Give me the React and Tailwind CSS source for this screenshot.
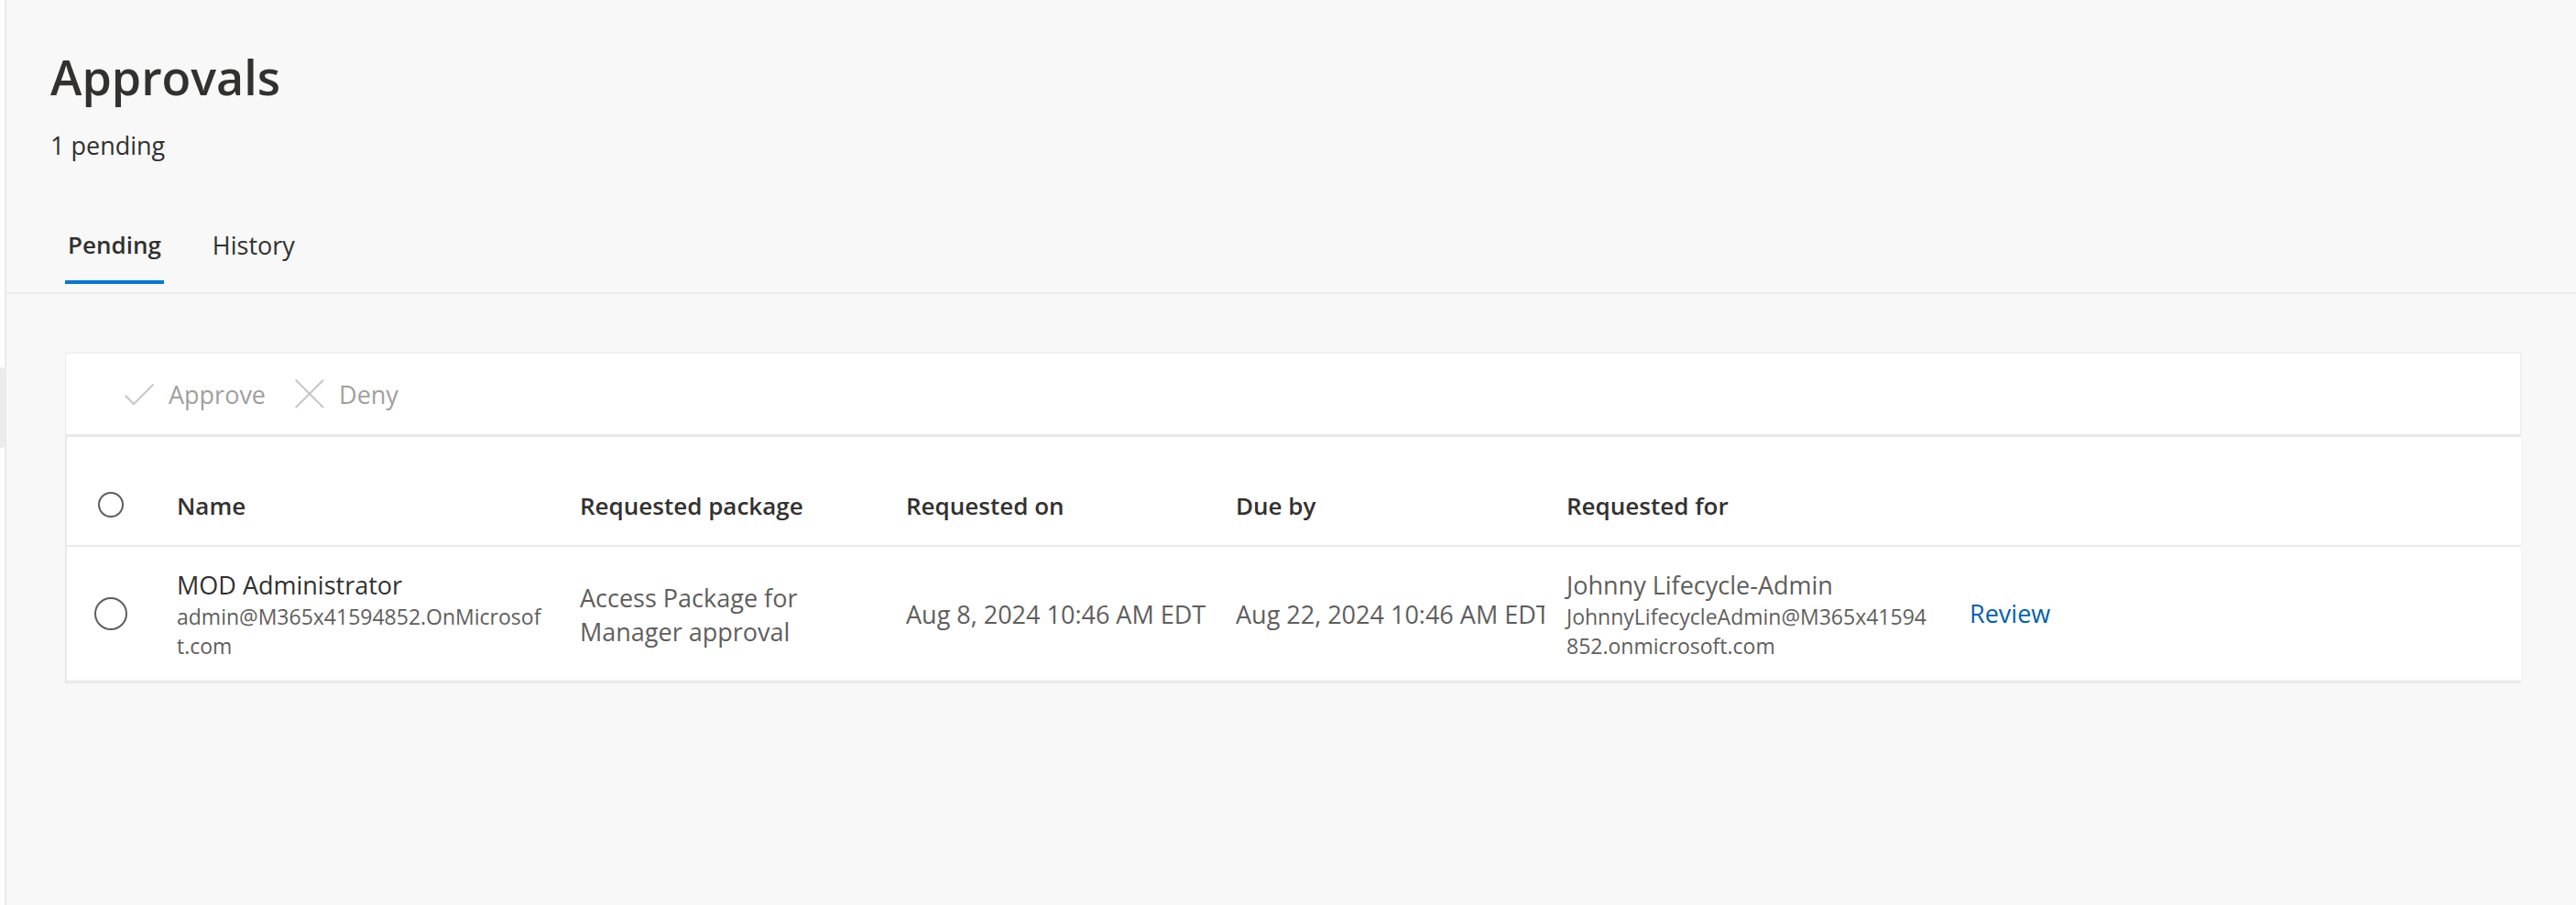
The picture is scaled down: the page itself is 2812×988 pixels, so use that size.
import { useState } from 'react';

const tabs = ['Pending', 'History'];

function CheckIcon() {
  return (
    <svg viewBox="0 0 32 32" className="size-8" fill="none" stroke="#c8c6c4" strokeWidth="2" aria-hidden="true">
      <path d="M0.7 17.7 L10 27 L31.3 5.7" />
    </svg>
  );
}

function CancelIcon() {
  return (
    <svg viewBox="0 0 32 32" className="size-8" fill="none" stroke="#c8c6c4" strokeWidth="2" aria-hidden="true">
      <path d="M0.7 0.7 L31 31 M31 0.7 L0.7 31" />
    </svg>
  );
}

function Tab({ label, active, onSelect }) {
  return (
    <button
      type="button"
      role="tab"
      aria-selected={active}
      onClick={onSelect}
      className={
        active
          ? 'border-b-4 border-[#0078d4] px-[3px] pb-5 text-[26px] font-semibold'
          : 'border-b-4 border-transparent px-[3px] pb-5'
      }
    >
      {label}
    </button>
  );
}

export default function App() {
  const [tab, setTab] = useState('Pending');

  return (
    <div className="flex min-h-screen bg-white font-['Segoe_UI','Open_Sans',sans-serif] text-[27px] leading-[37px] text-[#323130]">
      <aside className="w-[5px] shrink-0 pt-[401px]">
        <div className="h-[88px] rounded-r bg-[#edebe9]" />
      </aside>

      <main className="min-w-0 grow border-l-2 border-[#eaeaea] bg-[#f8f8f8]">
        <header className="px-12 pt-12">
          <h1 className="text-[52px] leading-[72px] font-semibold">Approvals</h1>
          <p className="mt-5">1 pending</p>
        </header>

        <div role="tablist" className="mt-[72px] flex gap-[50px] border-b-2 border-[#eaeaea] px-16 pb-[9px]">
          {tabs.map((label) => (
            <Tab key={label} label={label} active={tab === label} onSelect={() => setTab(label)} />
          ))}
        </div>

        <section className="mt-16 mr-[60px] ml-16">
          <div className="flex h-[89px] items-center gap-8 border border-b-0 border-[#eaeaea] bg-white px-16 text-[#a19f9d]">
            <button type="button" disabled className="flex items-center gap-4">
              <CheckIcon />
              Approve
            </button>
            <button type="button" disabled className="flex items-center gap-4">
              <CancelIcon />
              Deny
            </button>
          </div>

          <div className="border-t-[3px] border-b-2 border-l-2 border-[#e8e8e8] bg-white">
            <table className="w-full table-fixed text-left">
              <colgroup>
                <col className="w-24" />
                <col className="w-[440px]" />
                <col className="w-[356px]" />
                <col className="w-[360px]" />
                <col className="w-[361px]" />
                <col className="w-[440px]" />
                <col />
              </colgroup>
              <thead>
                <tr className="h-[119px] border-b-2 border-[#eaeaea] text-[26px]">
                  <th className="pt-[30px]">
                    <input
                      type="checkbox"
                      aria-label="Select all requests"
                      className="mx-auto block size-7 appearance-none rounded-full border-2 border-[#605e5c] checked:bg-[#0078d4]"
                    />
                  </th>
                  <th className="pt-8 pl-6 font-semibold">Name</th>
                  <th className="pt-8 pl-6 font-semibold">Requested package</th>
                  <th className="pt-8 pl-6 font-semibold">Requested on</th>
                  <th className="pt-8 pl-6 font-semibold">Due by</th>
                  <th className="pt-8 pl-6 font-semibold">Requested for</th>
                  <th />
                </tr>
              </thead>
              <tbody>
                <tr className="h-[147px] border-b-2 border-[#f0f0f0] text-[#605e5c]">
                  <td>
                    <input
                      type="checkbox"
                      aria-label="Select request from MOD Administrator"
                      className="mx-auto block size-9 appearance-none rounded-full border-2 border-[#605e5c] checked:bg-[#0078d4]"
                    />
                  </td>
                  <td className="pt-[2px] pr-4 pl-6">
                    <div className="text-[#323130]">MOD Administrator</div>
                    <div className="text-[23px] leading-8 break-all">admin@M365x41594852.OnMicrosoft.com</div>
                  </td>
                  <td className="pt-[2px] pr-12 pl-6">Access Package for Manager approval</td>
                  <td className="overflow-hidden pt-[2px] pl-6 whitespace-nowrap">Aug 8, 2024 10:46 AM EDT</td>
                  <td className="pt-[2px] pl-6">
                    <div className="overflow-hidden whitespace-nowrap">Aug 22, 2024 10:46 AM EDT</div>
                  </td>
                  <td className="pt-[2px] pr-4 pl-6">
                    <div>Johnny Lifecycle-Admin</div>
                    <div className="text-[23px] leading-8 break-all">JohnnyLifecycleAdmin@M365x41594852.onmicrosoft.com</div>
                  </td>
                  <td className="pl-6">
                    <a href="#review" className="text-[#005fb0]">Review</a>
                  </td>
                </tr>
              </tbody>
            </table>
          </div>
        </section>
      </main>
    </div>
  );
}
